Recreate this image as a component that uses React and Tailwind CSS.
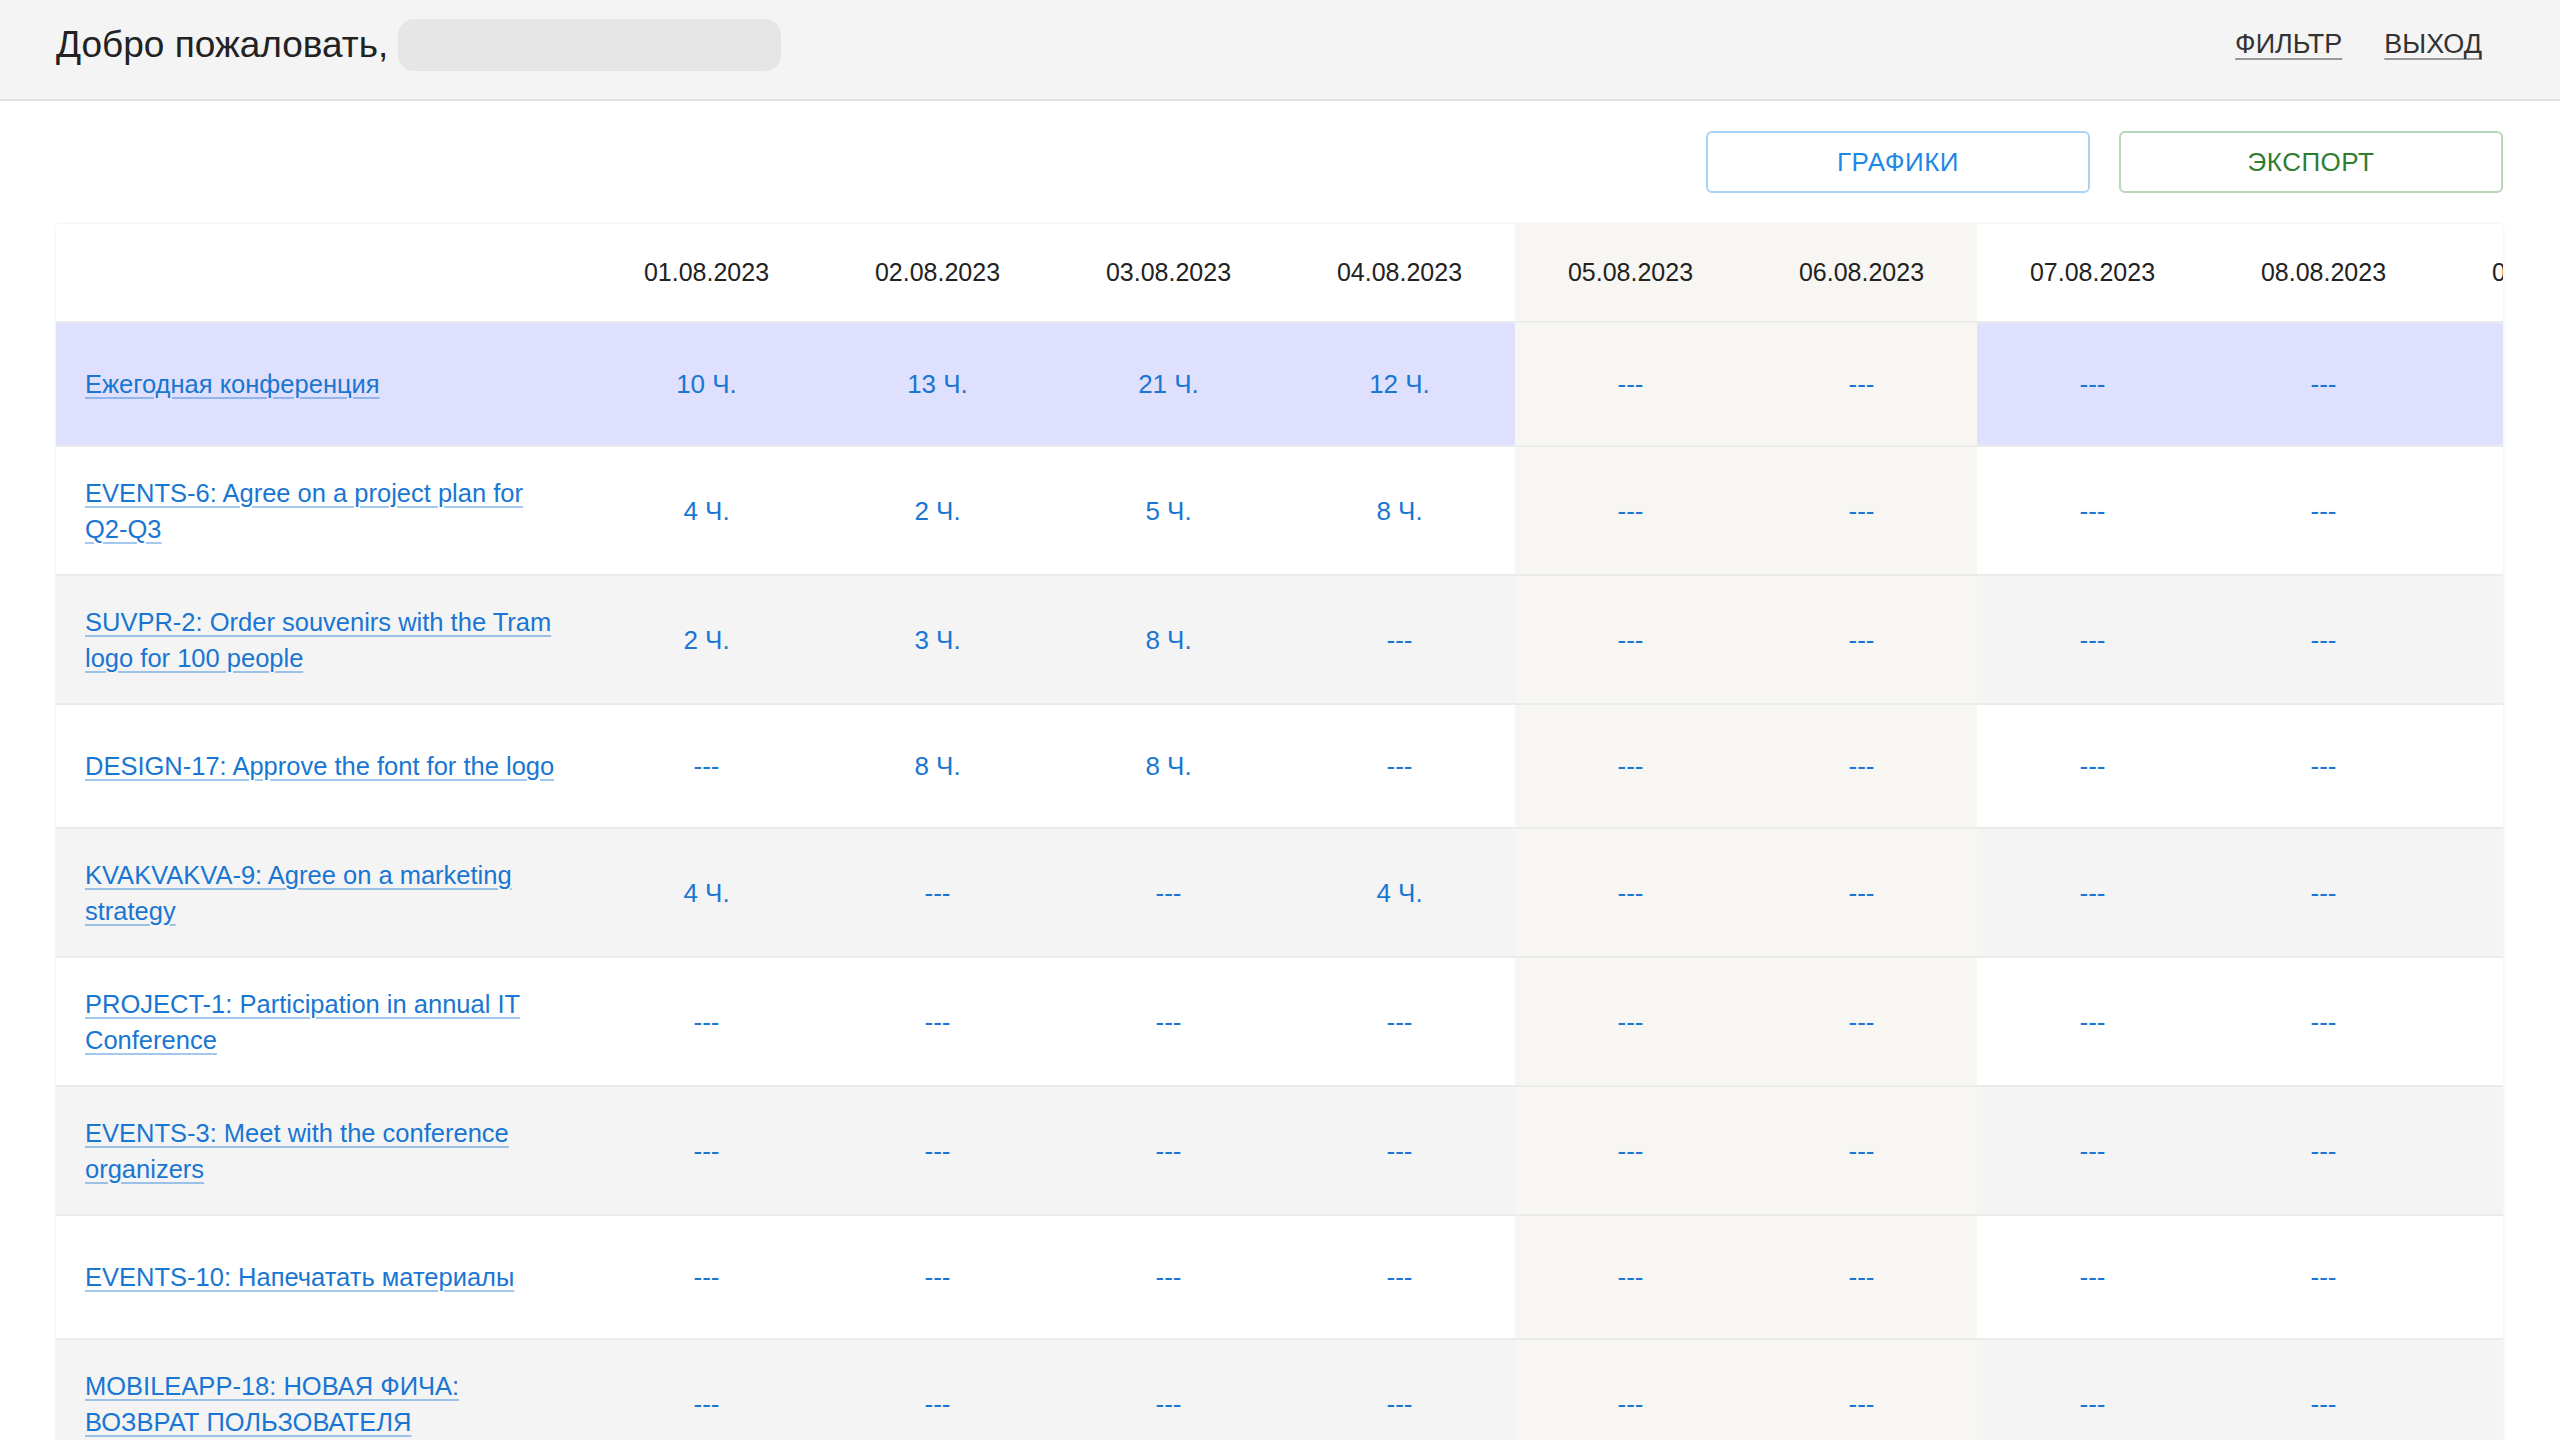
import React from 'react'

const DATES = [
    '01.08.2023',
    '02.08.2023',
    '03.08.2023',
    '04.08.2023',
    '05.08.2023',
    '06.08.2023',
    '07.08.2023',
    '08.08.2023',
    '09.08.2023',
    '10.08.2023'
]

// weekend columns are shaded
const WEEKEND = [4, 5]

const ROWS = [
    { title: ['Ежегодная конференция'], hours: ['10 Ч.', '13 Ч.', '21 Ч.', '12 Ч.'], summary: true },
    { title: ['EVENTS-6: Agree on a project plan for', 'Q2-Q3'], hours: ['4 Ч.', '2 Ч.', '5 Ч.', '8 Ч.'] },
    { title: ['SUVPR-2: Order souvenirs with the Tram', 'logo for 100 people'], hours: ['2 Ч.', '3 Ч.', '8 Ч.'] },
    { title: ['DESIGN-17: Approve the font for the logo'], hours: [null, '8 Ч.', '8 Ч.'] },
    { title: ['KVAKVAKVA-9: Agree on a marketing', 'strategy'], hours: ['4 Ч.', null, null, '4 Ч.'] },
    { title: ['PROJECT-1: Participation in annual IT', 'Conference'], hours: [] },
    { title: ['EVENTS-3: Meet with the conference', 'organizers'], hours: [] },
    { title: ['EVENTS-10: Напечатать материалы'], hours: [] },
    { title: ['MOBILEAPP-18: НОВАЯ ФИЧА:', 'ВОЗВРАТ ПОЛЬЗОВАТЕЛЯ'], hours: [] }
]

const rowBg = (row, i) => {
    if (row.summary) return 'bg-[#dfe0fd]'
    return i % 2 === 0 ? 'bg-[#f4f4f4]' : 'bg-white'
}

const App = () => {
    return (
        <div className="min-h-screen bg-white font-['Liberation_Sans',Arial,sans-serif] text-[#222]">
            {/* Header */}
            <header className="h-[101px] bg-[#f4f4f4] border-b-2 border-[#e2e2e2] flex items-center justify-between pl-[56px] pr-[78px] pb-[10px]">
                <div className="flex items-center">
                    <span className="text-[37px] leading-none text-[#222]">Добро пожаловать,</span>
                    <span className="ml-[10px] inline-block w-[383px] h-[52px] rounded-[16px] bg-[#e6e6e6]" />
                </div>
                <nav className="flex items-center gap-[42px] text-[27px] text-[#333] uppercase">
                    <a href="#" className="underline underline-offset-[5px] decoration-[#9a9a9a] decoration-2">Фильтр</a>
                    <a href="#" className="underline underline-offset-[5px] decoration-[#9a9a9a] decoration-2">Выход</a>
                </nav>
            </header>

            <main className="px-[56px] pr-[57px]">
                {/* Toolbar */}
                <div className="flex justify-end gap-[29px] pt-[30px]">
                    <button className="w-[384px] h-[62px] rounded-[6px] border-2 border-[#a9d3f5] text-[#1e88e5] text-[26px] tracking-[0.5px] uppercase bg-white">
                        Графики
                    </button>
                    <button className="w-[384px] h-[62px] rounded-[6px] border-2 border-[#b7d8b8] text-[#2e7d32] text-[26px] tracking-[0.5px] uppercase bg-white">
                        Экспорт
                    </button>
                </div>

                {/* Timesheet table */}
                <div className="mt-[31px] overflow-hidden rounded-[4px] bg-white shadow-[0_0_3px_rgba(0,0,0,0.10)]">
                    <table className="table-fixed border-collapse w-max">
                        <colgroup>
                            <col className="w-[535px]" />
                            {DATES.map((d) => (
                                <col key={d} className="w-[231px]" />
                            ))}
                        </colgroup>
                        <thead>
                            <tr className="h-[98px] border-b-2 border-[#ebebeb]">
                                <th className="bg-white" />
                                {DATES.map((d, j) => (
                                    <th
                                        key={d}
                                        className={`font-normal text-center text-[25px] text-[#222] ${WEEKEND.includes(j) ? 'bg-[#f7f6f2]' : 'bg-white'}`}
                                    >
                                        {d}
                                    </th>
                                ))}
                            </tr>
                        </thead>
                        <tbody>
                            {ROWS.map((row, i) => (
                                <tr key={i} className={`border-b-2 border-[#ebebeb] ${rowBg(row, i)}`}>
                                    <td className="h-[124px] py-[27.5px] pl-[29px] pr-[10px] text-[25.5px] leading-[36px] whitespace-nowrap">
                                        <a
                                            href="#"
                                            className="text-[#1976d2] underline underline-offset-[4px] decoration-2 decoration-[rgba(25,118,210,0.4)]"
                                        >
                                            {row.title.map((line, k) => (
                                                <React.Fragment key={k}>
                                                    {k > 0 && <br />}
                                                    {line}
                                                </React.Fragment>
                                            ))}
                                        </a>
                                    </td>
                                    {DATES.map((d, j) => (
                                        <td
                                            key={d}
                                            className={`text-center text-[26px] text-[#1976d2] leading-[36px] ${WEEKEND.includes(j) ? 'bg-[#f7f6f2]' : ''}`}
                                        >
                                            {row.hours[j] || '---'}
                                        </td>
                                    ))}
                                </tr>
                            ))}
                        </tbody>
                    </table>
                </div>
            </main>
        </div>
    )
}

export default App
